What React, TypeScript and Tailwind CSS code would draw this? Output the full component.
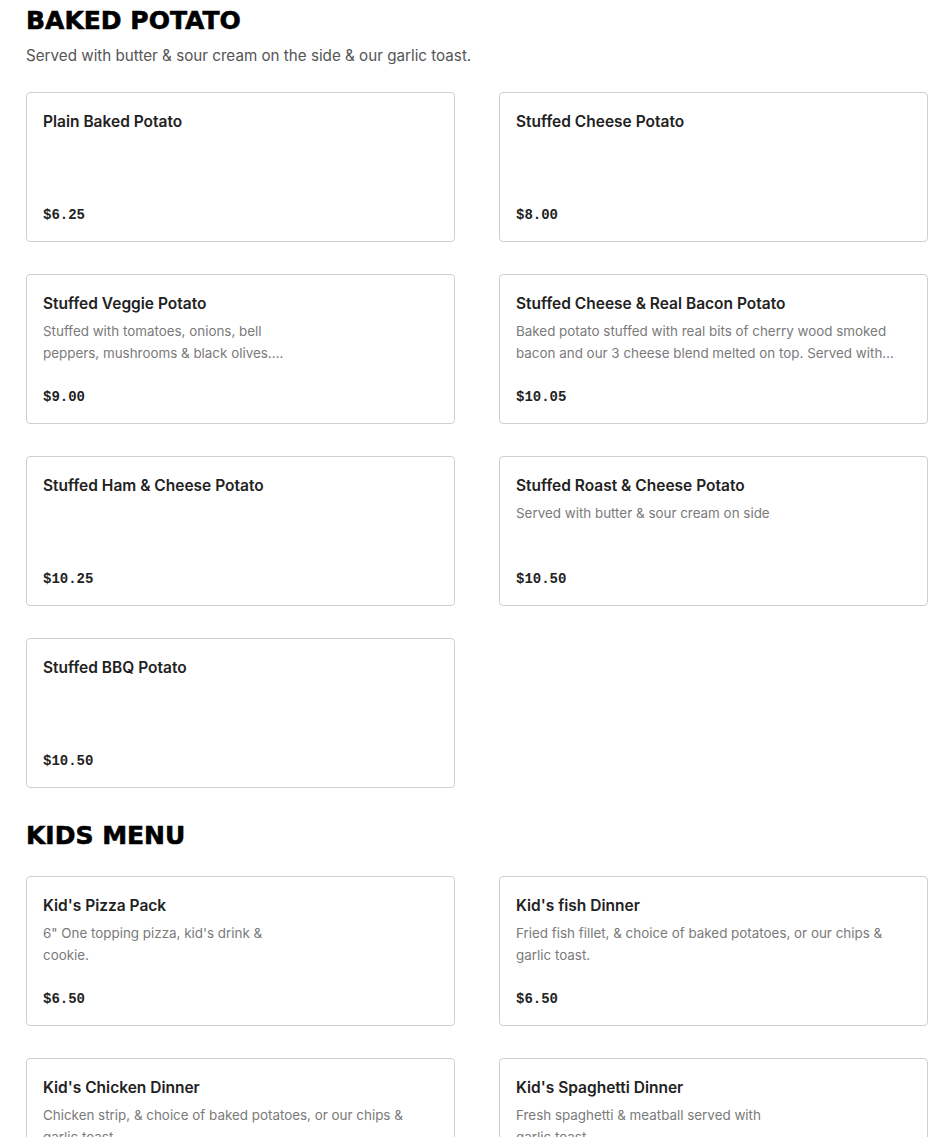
import React from "react";

type Item = { name: string; desc?: string[]; price: string };

const potato: Item[] = [
  { name: "Plain Baked Potato", price: "$6.25" },
  { name: "Stuffed Cheese Potato", price: "$8.00" },
  {
    name: "Stuffed Veggie Potato",
    desc: ["Stuffed with tomatoes, onions, bell", "peppers, mushrooms & black olives.…"],
    price: "$9.00",
  },
  {
    name: "Stuffed Cheese & Real Bacon Potato",
    desc: [
      "Baked potato stuffed with real bits of cherry wood smoked",
      "bacon and our 3 cheese blend melted on top. Served with…",
    ],
    price: "$10.05",
  },
  { name: "Stuffed Ham & Cheese Potato", price: "$10.25" },
  {
    name: "Stuffed Roast & Cheese Potato",
    desc: ["Served with butter & sour cream on side"],
    price: "$10.50",
  },
  { name: "Stuffed BBQ Potato", price: "$10.50" },
];

const kids: Item[] = [
  {
    name: "Kid's Pizza Pack",
    desc: ["6\" One topping pizza, kid's drink &", "cookie."],
    price: "$6.50",
  },
  {
    name: "Kid's fish Dinner",
    desc: ["Fried fish fillet, & choice of baked potatoes, or our chips &", "garlic toast."],
    price: "$6.50",
  },
  {
    name: "Kid's Chicken Dinner",
    desc: ["Chicken strip, & choice of baked potatoes, or our chips &", "garlic toast."],
    price: "$6.50",
  },
  {
    name: "Kid's Spaghetti Dinner",
    desc: ["Fresh spaghetti & meatball served with", "garlic toast."],
    price: "$6.50",
  },
];

function Card({ item }: { item: Item }) {
  return (
    <div className="flex h-[150px] flex-col rounded-[4px] border border-[#cfcfcf] bg-white px-4 pt-[18px] pb-[16px]">
      <div className="text-[15.5px] leading-[22px] font-semibold text-[#222]">{item.name}</div>
      {item.desc && (
        <div className="mt-[5px] text-[13.4px] leading-[22px] text-[#7a7a7a]">
          {item.desc.map((l, i) => (
            <div key={i} className="whitespace-nowrap">
              {l}
            </div>
          ))}
        </div>
      )}
      <div
        className="mt-auto text-[14px] leading-[20px] font-bold text-[#222]"
        style={{ fontFamily: '"Liberation Mono", monospace' }}
      >
        {item.price}
      </div>
    </div>
  );
}

function Heading({ children }: { children: React.ReactNode }) {
  return (
    <h2
      className="h-[40px] pt-[2px] text-[25px] leading-[38px] font-bold text-black [-webkit-text-stroke:0.6px_black]"
      style={{ fontFamily: '"DejaVu Sans", sans-serif' }}
    >
      {children}
    </h2>
  );
}

export default function App() {
  return (
    <div
      className="min-h-screen overflow-hidden bg-white pr-[22px] pl-[26px]"
      style={{ fontFamily: "Inter, 'Noto Sans', sans-serif" }}
    >
      <Heading>BAKED POTATO</Heading>
      <p className="mt-[4px] text-[15.2px] leading-[24px] text-[#555]">
        Served with butter &amp; sour cream on the side &amp; our garlic toast.
      </p>
      <div className="mt-[24px] grid grid-cols-2 gap-x-[44px] gap-y-[32px]">
        {potato.map((it) => (
          <Card key={it.name} item={it} />
        ))}
      </div>
      <div className="mt-[27px]">
        <Heading>KIDS MENU</Heading>
      </div>
      <div className="mt-[21px] grid grid-cols-2 gap-x-[44px] gap-y-[32px]">
        {kids.map((it) => (
          <Card key={it.name} item={it} />
        ))}
      </div>
    </div>
  );
}
